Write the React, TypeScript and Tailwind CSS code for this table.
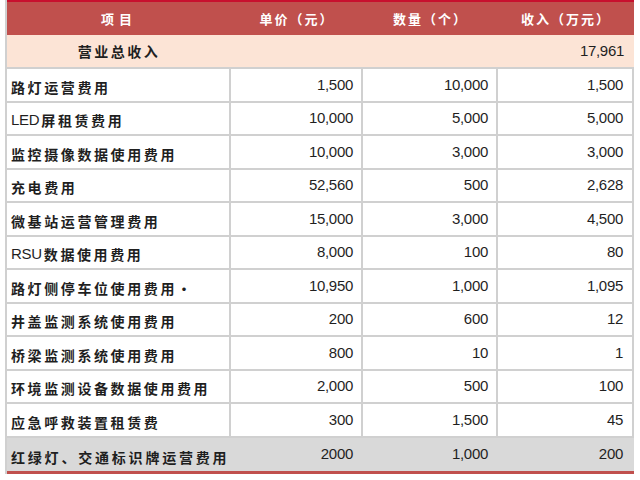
import React from 'react';

const rows: [string, string, string, string, string?][] = [
  ['路灯运营费用', '1,500', '10,000', '1,500'],
  ['屏租赁费用', '10,000', '5,000', '5,000', 'LED'],
  ['监控摄像数据使用费用', '10,000', '3,000', '3,000'],
  ['充电费用', '52,560', '500', '2,628'],
  ['微基站运营管理费用', '15,000', '3,000', '4,500'],
  ['数据使用费用', '8,000', '100', '80', 'RSU'],
  ['路灯侧停车位使用费用·', '10,950', '1,000', '1,095'],
  ['井盖监测系统使用费用', '200', '600', '12'],
  ['桥梁监测系统使用费用', '800', '10', '1'],
  ['环境监测设备数据使用费用', '2,000', '500', '100'],
  ['应急呼救装置租赁费', '300', '1,500', '45'],
];

const cjk = "font-['Noto_Sans_CJK_SC',sans-serif]";
const num = "font-['Liberation_Sans',Arial,sans-serif]";
const grid = 'grid grid-cols-[224px_132px_135px_136px]';

export default function App() {
  return (
    <div className="w-[640px] h-[480px] bg-white overflow-hidden">
      <div className="ml-[5px] w-[629px] border-l-2 border-[#d0d0d0]">
        {/* header */}
        <div className={`${grid} h-[35px] bg-[#c0504d] border-t-2 border-[#c8102e] text-white font-bold text-[13px] ${cjk}`}>
          <div className="flex items-center justify-center tracking-[5px]">项目</div>
          <div className="flex items-center justify-center tracking-[2px]">单价（元）</div>
          <div className="flex items-center justify-center tracking-[2px]">数量（个）</div>
          <div className="flex items-center justify-center tracking-[2px]">收入（万元）</div>
        </div>

        {/* total */}
        <div className={`${grid} h-[34px] bg-[#fce4d6] text-[#1f1f1f] border-b-2 border-[#d0d0d0]`}>
          <div className={`flex items-center justify-center font-bold text-[14px] tracking-[2.5px] ${cjk}`}>营业总收入</div>
          <div />
          <div />
          <div className={`flex items-center justify-end pr-[10px] text-[15px] tracking-[-0.3px] ${num}`}>17,961</div>
        </div>

        {rows.map((r) => (
          <div key={r[0]} className={`${grid} h-[33.5px] text-[#1f1f1f]`}>
            <div className="flex items-end pl-[4px] pb-[3px] border-r-2 border-b-2 border-[#d0d0d0]">
              {r[4] && <span className={`text-[15px] tracking-[-0.3px] mr-[2px] ${num}`}>{r[4]}</span>}
              <span className={`font-bold text-[14px] tracking-[2.6px] ${cjk}`}>{r[0]}</span>
            </div>
            <div className={`flex items-center justify-end pr-[8px] text-[15px] tracking-[-0.3px] border-r-2 border-b-2 border-[#d0d0d0] ${num}`}>{r[1]}</div>
            <div className={`flex items-center justify-end pr-[8px] text-[15px] tracking-[-0.3px] border-r-2 border-b-2 border-[#d0d0d0] ${num}`}>{r[2]}</div>
            <div className={`flex items-center justify-end pr-[9px] text-[15px] tracking-[-0.3px] border-r-2 border-b-2 border-[#d0d0d0] ${num}`}>{r[3]}</div>
          </div>
        ))}

        {/* last row */}
        <div className={`${grid} h-[36px] bg-[#d9d9d9] text-[#1f1f1f] border-b-[3px] border-[#c0504d]`}>
          <div className={`flex items-end pl-[4px] pb-[3px] font-bold text-[14px] tracking-[2.8px] ${cjk}`}>红绿灯、交通标识牌运营费用</div>
          <div className={`flex items-center justify-end pr-[10px] text-[15px] tracking-[-0.3px] ${num}`}>2000</div>
          <div className={`flex items-center justify-end pr-[10px] text-[15px] tracking-[-0.3px] ${num}`}>1,000</div>
          <div className={`flex items-center justify-end pr-[11px] text-[15px] tracking-[-0.3px] ${num}`}>200</div>
        </div>
      </div>
    </div>
  );
}
